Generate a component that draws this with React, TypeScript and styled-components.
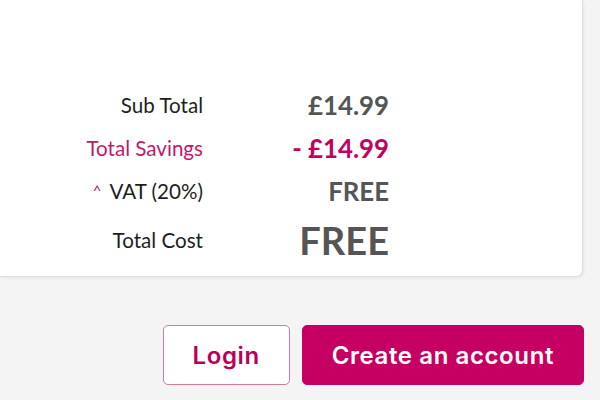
import styled, { createGlobalStyle } from "styled-components";

const GlobalStyle = createGlobalStyle`
  html, body {
    margin: 0;
    padding: 0;
    background: #f4f4f4;
  }
  * {
    box-sizing: border-box;
  }
`;

const Page = styled.div`
  width: 600px;
  height: 400px;
  overflow: hidden;
`;

const Card = styled.div`
  width: 583px;
  height: 277px;
  background: #ffffff;
  border: 1px solid #dedede;
  border-top: none;
  border-left: none;
  border-radius: 0 0 7px 0;
  box-shadow: 1px 1px 3px rgba(0, 0, 0, 0.06);
  padding-top: 83px;
`;

const Summary = styled.div`
  display: grid;
  grid-template-columns: 203px 186px;
  grid-auto-rows: 43px;
  align-items: center;
  font-family: "Lato", "Open Sans", sans-serif;
`;

const Label = styled.div<{ $accent?: boolean }>`
  justify-self: end;
  font-size: 20.6px;
  color: ${(p) => (p.$accent ? "#c2176b" : "#1e1e1e")};
`;

const Caret = styled.span`
  color: #c2176b;
  font-size: 15px;
  margin-right: 8px;
  position: relative;
  top: -3px;
`;

const Value = styled.div<{ $accent?: boolean; $big?: boolean }>`
  justify-self: end;
  font-weight: 700;
  font-size: ${(p) => (p.$big ? "38px" : "25.8px")};
  color: ${(p) => (p.$accent ? "#c4005f" : "#555555")};
`;

const TotalRow = styled.div`
  display: contents;
  & > * {
    margin-top: 12px;
  }
`;

const Actions = styled.div`
  display: flex;
  justify-content: flex-end;
  gap: 12px;
  padding-right: 16px;
  margin-top: 48px;
`;

const Button = styled.button<{ $primary?: boolean }>`
  height: 60px;
  border-radius: 5px;
  font-family: "Inter", "Lato", sans-serif;
  font-weight: 600;
  font-size: 24px;
  letter-spacing: 0.6px;
  cursor: pointer;
  border: 1px solid ${(p) => (p.$primary ? "#c60062" : "#d4799f")};
  background: ${(p) => (p.$primary ? "#c60062" : "#ffffff")};
  color: ${(p) => (p.$primary ? "#ffffff" : "#b8005a")};
  padding: 0 29px;
`;

export default function App() {
  return (
    <Page>
      <GlobalStyle />
      <Card>
        <Summary>
          <Label>Sub Total</Label>
          <Value>£14.99</Value>
          <Label $accent>Total Savings</Label>
          <Value $accent>- £14.99</Value>
          <Label>
            <Caret>^</Caret>VAT (20%)
          </Label>
          <Value>FREE</Value>
          <TotalRow>
            <Label>Total Cost</Label>
            <Value $big>FREE</Value>
          </TotalRow>
        </Summary>
      </Card>
      <Actions>
        <Button>Login</Button>
        <Button $primary>Create an account</Button>
      </Actions>
    </Page>
  );
}
